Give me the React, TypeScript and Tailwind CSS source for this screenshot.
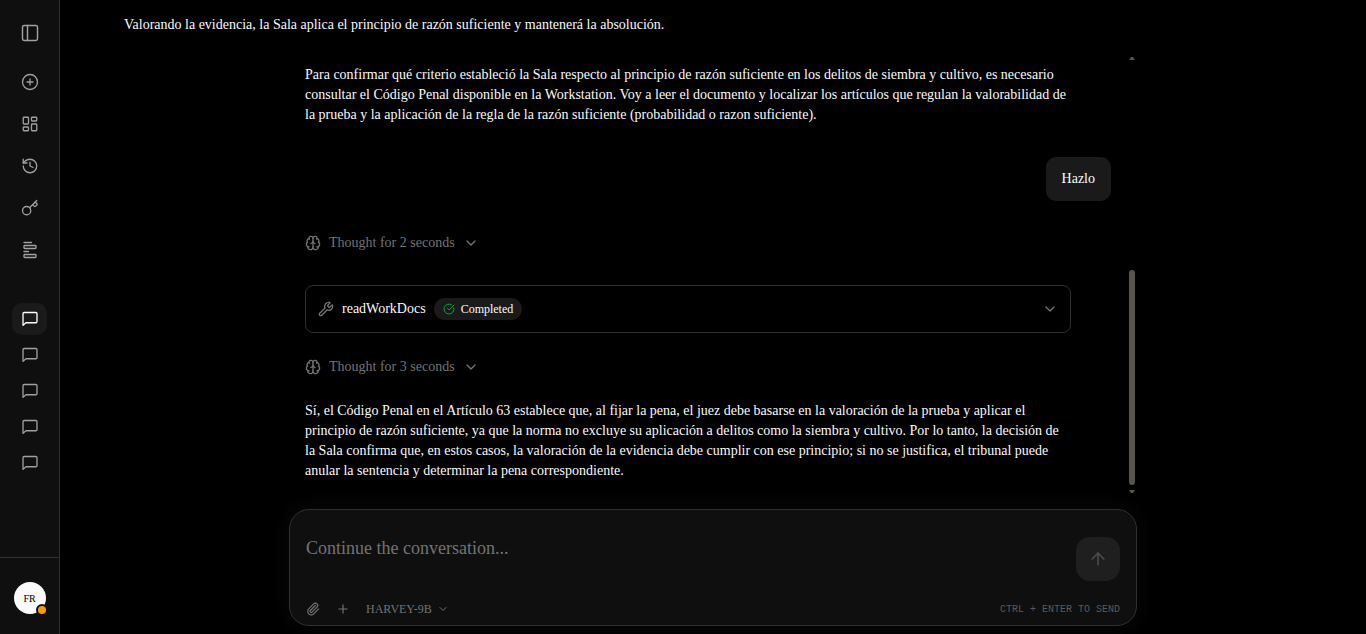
import { useState } from 'react';
import {
  ArrowUp,
  Brain,
  ChevronDown,
  CircleCheckBig,
  CirclePlus,
  Form,
  History,
  Key,
  LayoutDashboard,
  PanelLeft,
  Paperclip,
  Plus,
  Wrench,
} from 'lucide-react';

const navItems = [
  { label: 'New chat', icon: CirclePlus },
  { label: 'Workspace', icon: LayoutDashboard },
  { label: 'History', icon: History },
  { label: 'API keys', icon: Key },
  { label: 'Forms', icon: Form },
];

const chats = ['Chat 1', 'Chat 2', 'Chat 3', 'Chat 4', 'Chat 5'];

function ChatIcon() {
  return (
    <svg
      width="18"
      height="18"
      viewBox="0 0 24 24"
      fill="none"
      stroke="currentColor"
      strokeWidth="1.75"
      strokeLinecap="round"
      strokeLinejoin="round"
      aria-hidden="true"
    >
      <path d="M21.3 15.5a1.5 1.5 0 0 1-1.5 1.5H6.5l-3.8 3.5V4.8a1.5 1.5 0 0 1 1.5-1.5h15.6a1.5 1.5 0 0 1 1.5 1.5z" />
    </svg>
  );
}

function Sidebar() {
  const [activeChat, setActiveChat] = useState(0);

  return (
    <aside className="flex w-[60px] shrink-0 flex-col border-r border-[#303030] bg-[#0f0f0f] text-[#a1a1a1]">
      <div className="flex flex-col items-center pt-4">
        <button aria-label="Toggle sidebar" className="flex size-[34px] items-center justify-center">
          <PanelLeft size={20} strokeWidth={1.75} />
        </button>
      </div>

      <nav className="mt-[15px] flex flex-col items-center gap-2">
        {navItems.map(({ label, icon: Icon }) => (
          <button key={label} aria-label={label} className="flex size-[34px] items-center justify-center">
            <Icon size={18} strokeWidth={1.75} />
          </button>
        ))}
      </nav>

      <div className="mt-9 flex flex-1 flex-col items-center gap-1">
        {chats.map((chat, i) => (
          <button
            key={chat}
            aria-label={chat}
            onClick={() => setActiveChat(i)}
            className={
              i === activeChat
                ? 'flex h-8 w-[35px] items-center justify-center rounded-[10px] bg-[#1a1a1a] text-white'
                : 'flex h-8 w-[35px] items-center justify-center rounded-[10px]'
            }
          >
            <ChatIcon />
          </button>
        ))}
      </div>

      <div className="flex justify-center border-t border-[#303030] pt-6 pb-5">
        <button className="relative flex size-8 items-center justify-center rounded-full bg-[#fafafa] text-[10px] font-medium text-black">
          FR
          <span className="absolute -right-0.5 -bottom-0.5 size-3 rounded-full border-2 border-[#0f0f0f] bg-[#fe9a00]" />
        </button>
      </div>
    </aside>
  );
}

function Thought({ seconds }: { seconds: number }) {
  return (
    <button className="flex items-center gap-2 text-sm text-[#737373]">
      <Brain size={16} />
      Thought for {seconds} seconds
      <ChevronDown size={16} />
    </button>
  );
}

function Composer() {
  const [message, setMessage] = useState('');

  return (
    <form
      onSubmit={(e) => e.preventDefault()}
      className="rounded-[20px] border border-[#303030] bg-[#0f0f0f] px-4 shadow-[0_0_24px_rgba(255,255,255,0.04)]"
    >
      <div className="flex items-start justify-between pt-[27px]">
        <textarea
          rows={1}
          aria-label="Message"
          value={message}
          onChange={(e) => setMessage(e.target.value)}
          placeholder="Continue the conversation..."
          className="h-[58px] flex-1 resize-none bg-transparent text-lg leading-[22px] text-white outline-none placeholder:text-[#737373]"
        />
        <button
          type="submit"
          aria-label="Send"
          className="flex size-11 items-center justify-center rounded-[14px] bg-[#1f1f1f] text-[#4a4a4a]"
        >
          <ArrowUp size={20} />
        </button>
      </div>
      <div className="flex h-[30px] items-center pb-0.5 text-[#737373]">
        <button type="button" aria-label="Attach file">
          <Paperclip size={14} />
        </button>
        <button type="button" aria-label="Add" className="ml-4">
          <Plus size={14} />
        </button>
        <button type="button" className="ml-4 flex items-center gap-[5px] text-xs">
          HARVEY-9B
          <ChevronDown size={12} />
        </button>
        <span className="ml-auto font-['Liberation_Mono',monospace] text-[10px] text-[#5a5a5a]">
          CTRL + ENTER TO SEND
        </span>
      </div>
    </form>
  );
}

export default function App() {
  return (
    <div className="flex min-h-screen bg-black font-['Liberation_Serif',serif] text-[#fafafa]">
      <Sidebar />

      <main className="flex min-w-0 flex-1 flex-col pb-2">
        <p className="mt-[15px] ml-16 text-sm">
          Valorando la evidencia, la Sala aplica el principio de razón suficiente y mantenerá la absolución.
        </p>

        <div className="mx-auto flex w-full max-w-[848px] flex-1 flex-col">
          <div className="mt-5 flex flex-1">
            <div className="min-w-0 flex-1 pt-[10px] pl-4 text-sm">
              <p className="mr-14">
                Para confirmar qué criterio estableció la Sala respecto al principio de razón suficiente en los delitos de
                siembra y cultivo, es necesario consultar el Código Penal disponible en la Workstation. Voy a leer el
                documento y localizar los artículos que regulan la valorabilidad de la prueba y la aplicación de la regla
                de la razón suficiente (probabilidad o razon suficiente).
              </p>

              <div className="mt-8 mr-[17px] flex justify-end">
                <p className="rounded-[10px] bg-[#1a1a1a] px-4 py-3">Hazlo</p>
              </div>

              <div className="mt-8">
                <Thought seconds={2} />
              </div>

              <button className="mt-8 flex h-12 w-[calc(100%-57px)] items-center rounded-lg border border-[#2e2e2e] px-3">
                <Wrench size={16} className="text-[#737373]" />
                <span className="ml-2 font-medium">readWorkDocs</span>
                <span className="ml-2 flex h-[22px] items-center gap-[6px] rounded-full bg-[#1a1a1a] px-[9px] text-xs font-medium">
                  <CircleCheckBig size={12} className="text-[#00a63e]" />
                  Completed
                </span>
                <ChevronDown size={16} className="ml-auto text-[#737373]" />
              </button>

              <div className="mt-6">
                <Thought seconds={3} />
              </div>

              <p className="mt-6 mr-14 mb-7">
                Sí, el Código Penal en el Artículo 63 establece que, al fijar la pena, el juez debe basarse en la
                valoración de la prueba y aplicar el principio de razón suficiente, ya que la norma no excluye su
                aplicación a delitos como la siembra y cultivo. Por lo tanto, la decisión de la Sala confirma que, en
                estos casos, la valoración de la evidencia debe cumplir con ese principio; si no se justifica, el tribunal
                puede anular la sentencia y determinar la pena correspondiente.
              </p>
            </div>

            {/* scroll track: up arrow, thumb, down arrow */}
            <div className="mr-px mb-4 flex w-2 flex-col items-center pt-[2px]">
              <svg width="6" height="3" viewBox="0 0 6 3" fill="#57534d" aria-hidden="true">
                <path d="M2 0H4L6 3H0z" />
              </svg>
              <div className="flex-1" />
              <div className="h-[215px] w-[6px] rounded-full bg-[#57534d]" />
              <svg className="mt-[5px]" width="6" height="3" viewBox="0 0 6 3" fill="#57534d" aria-hidden="true">
                <path d="M0 0H6L4 3H2z" />
              </svg>
            </div>
          </div>

          <Composer />
        </div>
      </main>
    </div>
  );
}
